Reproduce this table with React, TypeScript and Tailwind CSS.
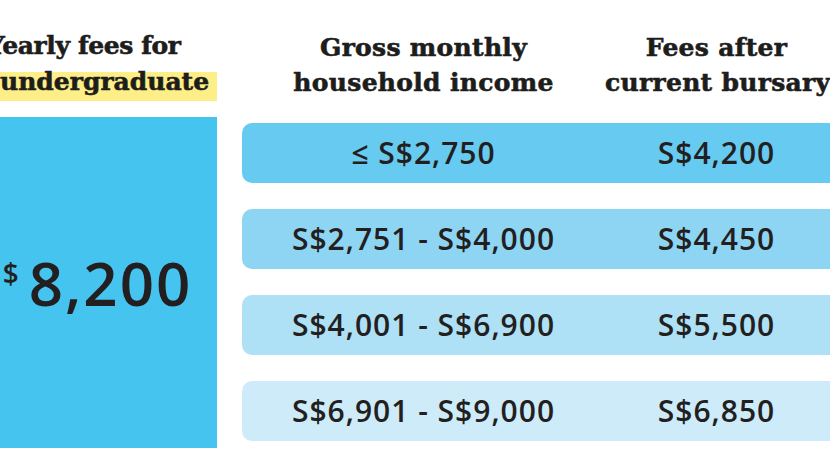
import React from 'react';

const rows = [
  { income: '≤ S$2,750', fee: 'S$4,200', bg: 'bg-[#67caf1]' },
  { income: 'S$2,751 - S$4,000', fee: 'S$4,450', bg: 'bg-[#8ed5f4]' },
  { income: 'S$4,001 - S$6,900', fee: 'S$5,500', bg: 'bg-[#aee0f6]' },
  { income: 'S$6,901 - S$9,000', fee: 'S$6,850', bg: 'bg-[#cdebf8]' },
];

const head =
  "font-['DejaVu_Serif',serif] font-bold text-[25px] text-[#1d1d1b] [-webkit-text-stroke:0.6px_#1d1d1b]";
const num = "font-['Open_Sans',sans-serif] font-[550] text-[#231f20]";

export default function App() {
  return (
    <div className="w-[830px] h-[468px] overflow-hidden bg-white">
      <div className="flex -ml-[22px]">
        {/* left column */}
        <div className="w-[239px] shrink-0 pt-[28px]">
          <div className={`${head} leading-[35px] pl-[9px] tracking-[-0.4px] whitespace-nowrap`}>Yearly fees for</div>
          <div className={`${head} mt-[9px] h-[29px] leading-[20px] bg-[#fdee87] pl-[22px] whitespace-nowrap`}>
            undergraduate
          </div>
          <div className="mt-[16px] h-[331px] bg-[#45c4ef] flex items-center justify-center">
            <span className={`${num} text-[28px] leading-none self-center -mt-[20px] mr-[10px]`}>$</span>
            <span className={`${num} text-[60px] leading-none tracking-[2px]`}>8,200</span>
          </div>
        </div>

        {/* table */}
        <div className="ml-[25px] w-[640px] shrink-0">
          <div className={`${head} flex pt-[30px] leading-[35px] tracking-[0.3px] whitespace-nowrap`}>
            <div className="w-[363px] text-center">
              Gross monthly
              <br />
              household income
            </div>
            <div className="w-[223px] text-center">
              Fees after
              <br />
              current bursary
            </div>
          </div>

          <div className="mt-[23px] flex flex-col gap-[26px]">
            {rows.map((r) => (
              <div key={r.income} className={`h-[60px] rounded-[10px] flex items-center ${r.bg}`}>
                <div className={`${num} w-[363px] text-center text-[30px] leading-none tracking-[1px]`}>{r.income}</div>
                <div className={`${num} w-[223px] text-center text-[30px] leading-none tracking-[1px]`}>{r.fee}</div>
              </div>
            ))}
          </div>
        </div>
      </div>
    </div>
  );
}
